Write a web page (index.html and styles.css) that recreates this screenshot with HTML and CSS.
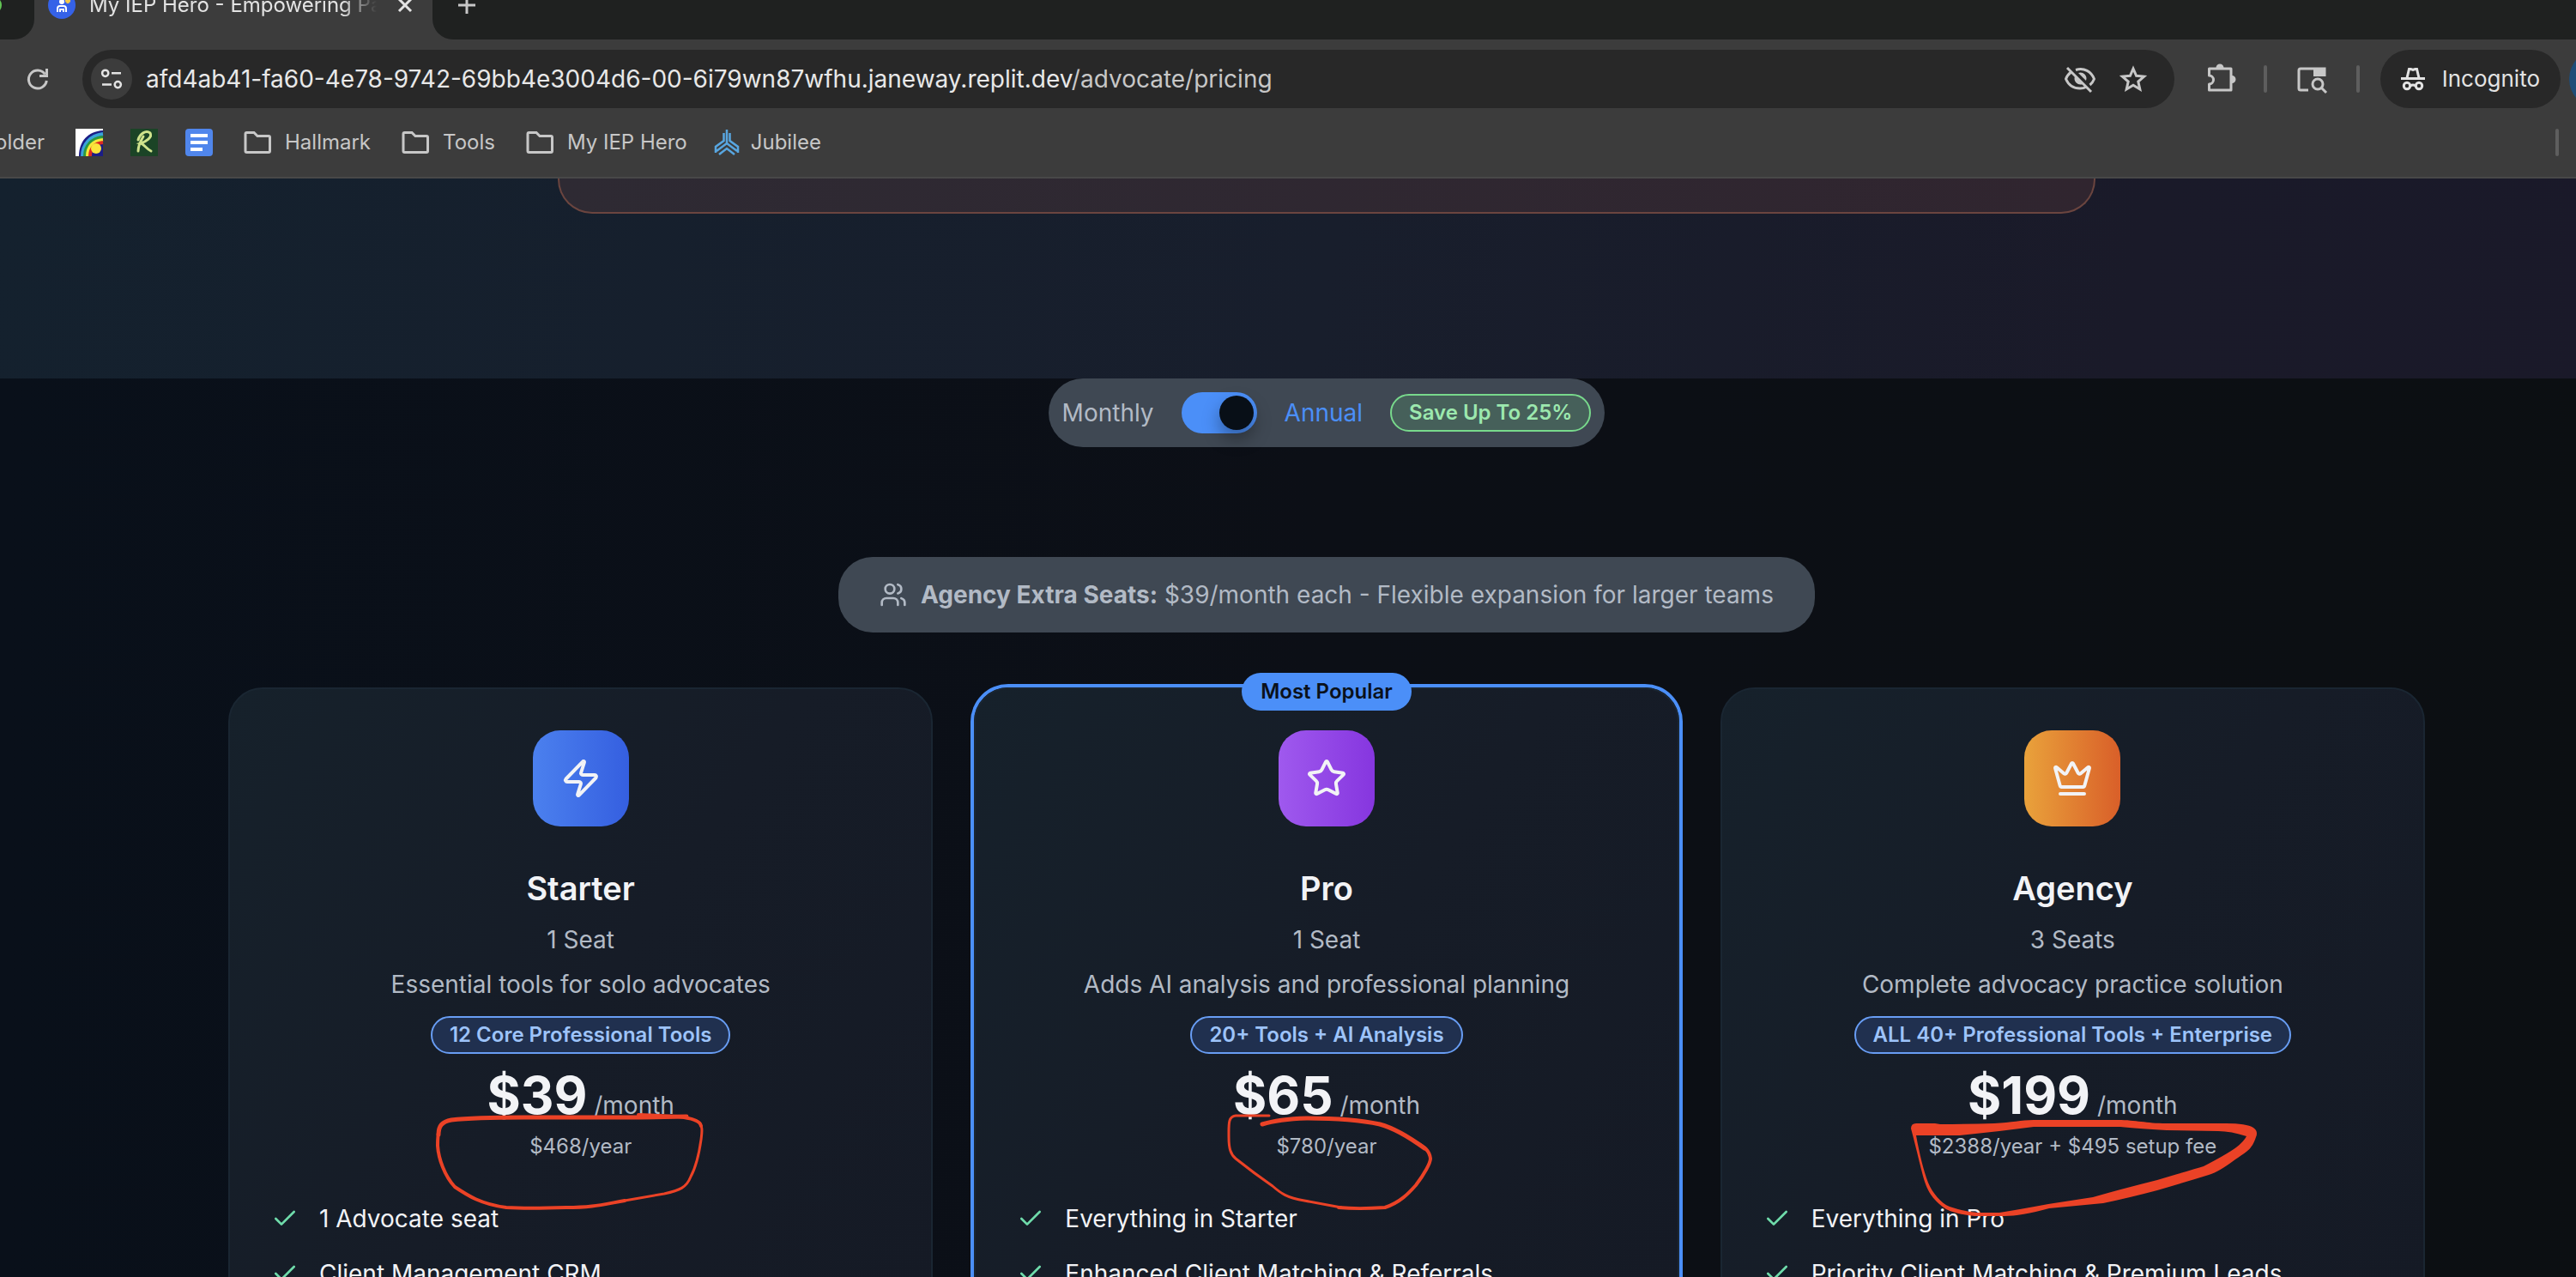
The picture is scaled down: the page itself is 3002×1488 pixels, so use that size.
FILE: index.html
```html
<!DOCTYPE html>
<html lang="en">
<head>
<meta charset="utf-8">
<title>My IEP Hero - Empowering Parents</title>
<link rel="stylesheet" href="styles.css">
</head>
<body>
<header class="browser">
  <div class="tabs">
    <div class="tab-prev"><span class="tab-prev-dot"></span></div>
    <div class="tab">
      <svg class="i32" viewBox="0 0 32 32"><circle cx="16" cy="16" r="16" fill="#3562e8"/><circle cx="16" cy="12" r="3" fill="#fff"/><path d="M11 24v-4a3 3 0 0 1 3-3h4a3 3 0 0 1 3 3v4M14 24v-3h4v3" fill="none" stroke="#fff" stroke-width="2"/><path d="M20 11h6M23 8v6" stroke="#f6c945" stroke-width="3"/></svg>
      <span class="tab-title">My IEP Hero - Empowering Parents</span>
      <button class="icon-btn" aria-label="Close tab"><svg class="i20" viewBox="0 0 20 20" fill="none" stroke="#e3e3e3" stroke-width="3"><path d="M3 3l14 14M17 3L3 17"/></svg></button>
    </div>
    <div class="tab-rest">
      <button class="icon-btn" aria-label="New tab"><svg class="i20" viewBox="0 0 20 20" fill="none" stroke="#c7c7c7" stroke-width="3"><path d="M10 0v20M0 10h20"/></svg></button>
    </div>
  </div>
  <div class="toolbar">
    <button class="icon-btn reload" aria-label="Reload"><svg class="i24" viewBox="0 0 24 24" fill="none" stroke="#c7c7c7" stroke-width="3"><path d="M20.500 6.500A10.500 10.500 0 1 0 22.300 14"/><path d="M22.500 0v8.500H14"/></svg></button>
    <div class="omnibox">
      <button class="site-info" aria-label="View site information"><svg class="i24" viewBox="0 0 24 24" fill="none" stroke="#e3e3e3" stroke-width="2.500"><circle cx="4.700" cy="5.300" r="3.600"/><path d="M12 5.300h11M1 18.600h11"/><circle cx="19.300" cy="18.600" r="3.600"/></svg></button>
      <div class="url" role="textbox" aria-label="Address">afd4ab41-fa60-4e78-9742-69bb4e3004d6-00-6i79wn87wfhu.janeway.replit.dev<span class="path">/advocate/pricing</span></div>
      <button class="icon-btn" aria-label="Third-party cookies blocked"><svg class="i36" viewBox="0 0 36 36" fill="none" stroke="#c7c7c7" stroke-width="3"><path d="M8 9.500C5 12 2.500 15 1.500 18c3 7 9 11 16.500 11 3 0 5-.5 7-1.500M13 7.500c10-3 18 2 21.500 10.500-1 2.500-2.500 5-5 7"/><path d="M16 11a7 7 0 0 1 9 9M12 15a7 7 0 0 0 9 9z" fill="#c7c7c7" stroke="none"/><path d="M3 5l28 28"/></svg></button>
      <button class="icon-btn" aria-label="Bookmark this tab"><svg class="i32" viewBox="0 0 32 32" fill="none" stroke="#c7c7c7" stroke-width="3"><path d="M16 4l3.600 8.300 9 .8-6.800 6 2 8.900-7.800-4.700L8.200 28l2-8.900-6.800-6 9-.8z"/></svg></button>
    </div>
    <button class="icon-btn" aria-label="Extensions"><svg class="i36" viewBox="0 0 36 36" fill="none" stroke="#c7c7c7" stroke-width="3" stroke-linejoin="round"><path d="M6.500 6h25.500v25H6.500v-7a5 5 0 0 0 0-10z"/><path d="M14.500 5a4.500 4.500 0 0 1 9 0zM33 14a4.500 4.500 0 0 1 0 9z" fill="#c7c7c7" stroke="none"/></svg></button>
    <span class="sep"></span>
    <button class="icon-btn" aria-label="Search side panel"><svg class="i36" viewBox="0 0 36 36" fill="none" stroke="#c7c7c7" stroke-width="3"><path d="M14 31H5a2 2 0 0 1-2-2V8a2 2 0 0 1 2-2h28v9"/><path d="M20 5h14v10H20z" fill="#c7c7c7" stroke="none"/><circle cx="25" cy="24" r="6"/><path d="M29 28l6 6"/></svg></button>
    <span class="sep"></span>
    <button class="incognito"><svg class="i28" viewBox="0 0 28 28" fill="none" stroke="#e3e3e3" stroke-width="3"><path d="M0 13.500h28M7 13l2.500-10.500h2l2.500 1 2.500-1h2L21 13"/><circle cx="7" cy="22" r="3.700"/><circle cx="21" cy="22" r="3.700"/><path d="M11 22q3-2 6 0"/></svg>Incognito</button>
    <span class="update"></span>
  </div>
  <nav class="bookmarks">
    <a class="bm cut" href="#">older</a>
    <a class="bm site" href="#" aria-label="Rainbow"><svg class="i32" viewBox="0 0 32 32"><path d="M0 0h32v32H0z" fill="#fff"/><path d="M4 32C4 15 14 3 32 2v30z" fill="#1b1d86"/><g fill="none" stroke-width="4"><path d="M8 32C8 18 17 8 32 6" stroke="#3aa3d8"/><path d="M11 32c0-12 8-21 21-22" stroke="#2c9a3f"/><path d="M14 32c0-11 6-18 18-19" stroke="#f4e83a"/><path d="M17 32c0-9 5-15 15-16" stroke="#dc2a22"/></g><circle cx="24" cy="23" r="6" fill="#fbe63c"/></svg></a>
    <a class="bm site" href="#" aria-label="R"><svg class="i32" viewBox="0 0 32 32"><path d="M0 0h32v32H0z" fill="#1b4426"/><path d="M9 13C11 6 18 1 23 5C26 10 18 15 12 17C16 18 18 23 24 26M15 9C12 14 9 20 9 26" fill="none" stroke="#cfe38c" stroke-width="3" stroke-linecap="round"/></svg></a>
    <a class="bm" href="#" aria-label="Docs"><svg class="i32" viewBox="0 0 32 32"><rect width="32" height="32" rx="4" fill="#5086ec"/><path d="M6 8h20M6 16h20M6 24h14" stroke="#fff" stroke-width="4"/></svg></a>
    <a class="bm" href="#"><svg class="i32 folder" viewBox="0 0 32 32"><path d="M2 26V6q0-1.500 1.500-1.500H12l4 4h13q1.500 0 1.500 1.500v16q0 1.500-1.500 1.500H3.500Q2 27.500 2 26z"/></svg>Hallmark</a>
    <a class="bm" href="#"><svg class="i32 folder" viewBox="0 0 32 32"><path d="M2 26V6q0-1.500 1.500-1.500H12l4 4h13q1.500 0 1.500 1.500v16q0 1.500-1.500 1.500H3.500Q2 27.500 2 26z"/></svg>Tools</a>
    <a class="bm" href="#"><svg class="i32 folder" viewBox="0 0 32 32"><path d="M2 26V6q0-1.500 1.500-1.500H12l4 4h13q1.500 0 1.500 1.500v16q0 1.500-1.500 1.500H3.500Q2 27.500 2 26z"/></svg>My IEP Hero</a>
    <a class="bm jub" href="#"><svg class="i32" viewBox="0 0 32 32" fill="none" stroke="#58a6e0" stroke-width="2.500"><path d="M12.500 5v9L3 21v7M19.500 5v9l9.500 7v7M16 1v16M16 17L4 26M16 17l12 9M7 30l9-7 9 7"/></svg>Jubilee</a>
    <span class="sep last"></span>
  </nav>
</header>
<main class="page">
  <section class="hero"><div class="notice"></div></section>
  <section class="pricing">
    <div class="billing">
      <label for="annual">Monthly</label>
      <input type="checkbox" role="switch" id="annual" class="switch" checked>
      <label for="annual" class="on">Annual</label>
      <span class="badge save">Save Up To 25%</span>
    </div>
    <p class="seats"><svg class="i32" viewBox="0 0 24 24" fill="none" stroke="currentColor" stroke-width="2" stroke-linecap="round" stroke-linejoin="round"><path d="M16 21v-2a4 4 0 0 0-4-4H6a4 4 0 0 0-4 4v2"/><circle cx="9" cy="7" r="4"/><path d="M22 21v-2a4 4 0 0 0-3-3.870M16 3.130a4 4 0 0 1 0 7.750"/></svg><span><strong>Agency Extra Seats:</strong> $39/month each - Flexible expansion for larger teams</span></p>
    <div class="plans">
      <article class="card">
        <div class="tile blue"><svg class="i48" viewBox="0 0 24 24"><path d="M4 14a1 1 0 0 1-.78-1.630l9.900-10.200a.5.5 0 0 1 .86.460l-1.920 6.020A1 1 0 0 0 13 10h7a1 1 0 0 1 .78 1.630l-9.900 10.200a.5.5 0 0 1-.86-.460l1.920-6.020A1 1 0 0 0 11 14z"/></svg></div>
        <h2>Starter</h2>
        <p class="line">1 Seat</p>
        <p class="line">Essential tools for solo advocates</p>
        <span class="badge tools">12 Core Professional Tools</span>
        <p class="price"><strong>$39</strong> /month</p>
        <p class="year">$468/year</p>
        <ul>
          <li><svg class="i32 check" viewBox="0 0 24 24"><path d="M20 6 9 17l-5-5"/></svg>1 Advocate seat</li>
          <li><svg class="i32 check" viewBox="0 0 24 24"><path d="M20 6 9 17l-5-5"/></svg>Client Management CRM</li>
        </ul>
        <svg class="mark" viewBox="268 803 817 685" width="817" height="685"><g>
          <path stroke-width="5" d="M511 1322C511 1312 515 1307 526 1305C560 1301 600 1302 642 1302H745L800 1301"/>
          <path stroke-width="4" d="M744 1299L790 1301Q816 1304 817 1312"/>
          <path stroke-width="3" d="M812 1306C820 1310 818 1320 817 1328C815 1342 811 1360 805 1371C800 1384 792 1387 774 1391L728 1399"/>
          <path stroke-width="4" d="M728 1399C700 1404 690 1407 660 1407C630 1408 605 1408 590 1407C560 1403 545 1393 530 1383C518 1370 511 1350 510 1335C510 1326 510 1322 512 1315"/>
        </g></svg>
      </article>
      <article class="card popular">
        <span class="badge flag">Most Popular</span>
        <div class="tile purple"><svg class="i48" viewBox="0 0 24 24"><path d="M11.525 2.295a.53.53 0 0 1 .95 0l2.310 4.679a2.123 2.123 0 0 0 1.595 1.160l5.166.756a.53.53 0 0 1 .294.904l-3.736 3.638a2.123 2.123 0 0 0-.611 1.878l.882 5.140a.53.53 0 0 1-.771.560l-4.618-2.428a2.122 2.122 0 0 0-1.973 0L6.396 21.010a.53.53 0 0 1-.770-.560l.881-5.139a2.122 2.122 0 0 0-.611-1.879L2.160 9.795a.53.53 0 0 1 .294-.906l5.165-.755a2.122 2.122 0 0 0 1.597-1.160z"/></svg></div>
        <h2>Pro</h2>
        <p class="line">1 Seat</p>
        <p class="line">Adds AI analysis and professional planning</p>
        <span class="badge tools">20+ Tools + AI Analysis</span>
        <p class="price"><strong>$65</strong> /month</p>
        <p class="year">$780/year</p>
        <ul>
          <li><svg class="i32 check" viewBox="0 0 24 24"><path d="M20 6 9 17l-5-5"/></svg>Everything in Starter</li>
          <li><svg class="i32 check" viewBox="0 0 24 24"><path d="M20 6 9 17l-5-5"/></svg>Enhanced Client Matching &amp; Referrals</li>
        </ul>
        <svg class="mark" viewBox="1137 803 817 685" width="817" height="685"><g>
          <path stroke-width="3" d="M1479 1300L1440 1300C1431 1301 1432 1310 1432 1325C1432 1338 1434 1345 1440 1350C1455 1362 1470 1373 1483 1382C1492 1390 1500 1396 1520 1399L1563 1407"/>
          <path stroke-width="4" d="M1560 1407C1580 1409 1600 1408 1614 1407C1632 1401 1642 1390 1650 1381C1660 1368 1667 1355 1667 1350C1666 1341 1660 1336 1650 1331"/>
          <path stroke-width="5" d="M1660 1338Q1630 1316 1608 1310C1580 1304 1550 1303 1523 1303Q1490 1304 1471 1310"/>
        </g></svg>
      </article>
      <article class="card">
        <div class="tile orange"><svg class="i48" viewBox="0 0 24 24"><path d="M11.562 3.266a.5.5 0 0 1 .876 0L15.390 8.870a1 1 0 0 0 1.516.294L21.183 5.500a.5.5 0 0 1 .798.519l-2.834 10.246a1 1 0 0 1-.956.734H5.810a1 1 0 0 1-.957-.734L2.020 6.020a.5.5 0 0 1 .798-.519l4.276 3.664a1 1 0 0 0 1.516-.294zM5 21h14"/></svg></div>
        <h2>Agency</h2>
        <p class="line">3 Seats</p>
        <p class="line">Complete advocacy practice solution</p>
        <span class="badge tools">ALL 40+ Professional Tools + Enterprise</span>
        <p class="price"><strong>$199</strong> /month</p>
        <p class="year">$2388/year + $495 setup fee</p>
        <ul>
          <li><svg class="i32 check" viewBox="0 0 24 24"><path d="M20 6 9 17l-5-5"/></svg>Everything in Pro</li>
          <li><svg class="i32 check" viewBox="0 0 24 24"><path d="M20 6 9 17l-5-5"/></svg>Priority Client Matching &amp; Premium Leads</li>
        </ul>
        <svg class="mark" viewBox="2007 803 817 685" width="817" height="685"><path class="band" d="M2227 1315Q2227 1309 2233 1309H2255L2261 1310Q2295 1310 2324 1309C2345 1308 2355 1305 2370 1305H2468C2490 1305 2500 1309 2525 1309H2594Q2618 1309 2626 1314Q2632 1318 2629 1325C2624 1340 2618 1342 2605 1351Q2585 1366 2574 1369Q2545 1378 2514 1387Q2480 1396 2451 1402L2388 1408Q2355 1417 2336 1417H2301Q2280 1415 2268 1409C2250 1397 2246 1385 2243 1377C2238 1360 2235 1345 2227 1315ZM2233 1323C2237 1345 2242 1365 2247 1378C2252 1390 2262 1402 2272 1406Q2290 1412 2305 1413H2330Q2355 1409 2387 1403L2439 1395Q2470 1386 2514 1375Q2555 1363 2568 1359Q2595 1345 2606 1337Q2615 1330 2618 1324Q2600 1318 2585 1318L2525 1317Q2490 1315 2471 1313H2370L2330 1318L2284 1323Z"/></svg>
      </article>
    </div>
  </section>
</main>
</body>
</html>
```
FILE: styles.css
```css
* { box-sizing: border-box; }
html { background: #0a0f16; }
body {
  margin: 0;
  height: 100vh;
  overflow: hidden;
  font-family: Inter, "Liberation Sans", sans-serif;
  font-size: 28px;
  line-height: 40px;
  color: #b2bac5;
  display: flex;
  flex-direction: column;
}
p, h2, ul { margin: 0; padding: 0; }
button { font: inherit; color: inherit; border: 0; padding: 0; background: none; }
a { color: inherit; text-decoration: none; }
svg { flex: none; display: block; overflow: visible; }
.i20 { width: 20px; height: 20px; }
.i24 { width: 24px; height: 24px; }
.i28 { width: 28px; height: 28px; }
.i32 { width: 32px; height: 32px; }
.i36 { width: 36px; height: 36px; }
.i48 { width: 48px; height: 48px; }

/* Browser chrome */
.browser { flex: none; background: #3c3c3c; border-bottom: 2px solid #484848; font-size: 24px; color: #c7c7c7; }
.tabs { height: 46px; display: flex; align-items: flex-end; overflow: hidden; }
.tab-prev, .tab, .tab-rest { height: 80px; flex: none; display: flex; align-items: center; }
.tab-prev { width: 40px; background: #1f2120; border-radius: 0 0 24px 0; }
.tab-prev-dot { width: 20px; height: 20px; margin-left: -18px; border-radius: 50%; background: #62c554; }
.tab { width: 464px; padding: 0 22px 0 16px; gap: 16px; color: #e3e3e3; }
.tab-title { flex: 1; overflow: hidden; white-space: nowrap; mask-image: linear-gradient(90deg, #000 86%, transparent 98%); }
.tab-rest { flex: 1; padding-left: 30px; background: #1f2120; border-radius: 0 0 0 24px; }
.toolbar { display: flex; align-items: center; gap: 34px; padding-top: 12px; padding-left: 32px; overflow: hidden; }
.reload { margin-right: 6px; }
.omnibox { flex: 1; height: 68px; display: flex; align-items: center; gap: 28px; padding: 0 32px 0 10px; border-radius: 34px; background: #282828; }
.site-info { width: 48px; height: 48px; border-radius: 50%; background: #3c3c3c; display: grid; place-items: center; }
.url { flex: 1; margin-left: -12px; font-size: 28px; color: #e8e8e8; white-space: nowrap; }
.path { color: #c7c7c7; }
.sep { flex: none; width: 4px; height: 32px; border-radius: 2px; background: #5e5e5e; }
.incognito { height: 68px; margin-left: -10px; padding: 0 24px; display: flex; align-items: center; gap: 20px; border-radius: 34px; background: #282828; color: #e3e3e3; font-size: 26px; }
.update { flex: none; width: 68px; height: 68px; margin: 0 -60px 0 -24px; border-radius: 50%; background: #1f4d78; }
.bookmarks { height: 80px; display: flex; align-items: center; gap: 36px; padding-right: 20px; }
.bm { display: flex; align-items: center; gap: 16px; }
.site { margin-right: -4px; }
.cut { width: 52px; justify-content: flex-end; }
.jub { gap: 12px; margin-left: -6px; }
.folder { fill: none; stroke: #c7c7c7; stroke-width: 3px; }
.last { margin-left: auto; }

/* The page runs on past the right edge of the window */
.page { flex: 1; min-height: 0; overflow: hidden; margin-right: -90px; background: linear-gradient(90deg, #09101a, #0c0f16 50%, #0c0f12); }
.hero { height: 233px; background: linear-gradient(100deg, #14212e, #181e2c 50%, #1a1a29 80%, #1a1929); }
.notice { width: 1792px; height: 41px; margin: 0 auto; border: 2px solid #6b453f; border-top: 0; border-radius: 0 0 40px 40px; background: linear-gradient(90deg, #2e2a33, #30252f); }
.pricing { display: flex; flex-direction: column; align-items: center; }
.billing { height: 80px; padding: 0 16px; display: flex; align-items: center; gap: 32px; border-radius: 40px; background: #3f4853; }
.on { color: #4b8ff8; }
.switch { appearance: none; margin: 0; width: 88px; height: 48px; padding: 4px; border-radius: 24px; background: #4b8ff8; display: flex; justify-content: flex-end; }
.switch::before { content: ""; width: 40px; height: 40px; border-radius: 50%; background: #080f17; box-shadow: 0 10px 20px rgba(0, 0, 0, .35); }
.badge { height: 44px; padding: 0 20px; border: 2px solid; border-radius: 22px; font-size: 24px; font-weight: 600; display: flex; align-items: center; white-space: nowrap; }
.save { color: #9ce8ae; border-color: #78d98c; background: #46605a; }
.seats { height: 88px; margin-top: 128px; padding: 0 48px; display: flex; align-items: center; gap: 16px; border-radius: 40px; background: #3f4853; }
.seats strong { font-weight: 700; }
.plans { width: 2560px; margin-top: 64px; display: grid; grid-template-columns: repeat(3, 1fr); gap: 48px; }
.card { position: relative; padding: 48px; border: 2px solid #1a2632; border-radius: 40px; background: linear-gradient(125deg, #16212b, #161c27 50%, #151a25); display: flex; flex-direction: column; align-items: center; }
.popular { box-shadow: 0 0 0 4px #4b8ff8; }
.flag { position: absolute; top: -19px; border: 0; padding: 0 22px; background: #4b8ff8; color: #0a111b; }
.tile { width: 112px; height: 112px; border-radius: 32px; display: grid; place-items: center; }
.tile svg { fill: none; stroke: #f2f3f6; stroke-width: 2; stroke-linecap: round; stroke-linejoin: round; }
.blue { background: linear-gradient(90deg, #4b80ee, #355fe0); }
.purple { background: linear-gradient(90deg, #9f59ee, #8636df); }
.orange { background: linear-gradient(90deg, #e9a23b, #d95f29); }
h2 { margin-top: 46px; font-size: 38px; font-weight: 600; line-height: 52px; color: #f2f3f6; }
.line { margin-top: 12px; }
h2 + .line { margin-top: 14px; }
.tools { margin-top: 17px; color: #9dc3f9; border-color: #689df4; background: #20304f; }
.price { margin-top: 16px; line-height: 64px; }
.price strong { font-size: 60px; font-weight: 700; color: #f2f3f6; }
.year { font-size: 24px; line-height: 32px; }
ul { align-self: stretch; margin-top: 48px; display: grid; gap: 24px; list-style: none; color: #f2f3f6; }
li { display: flex; align-items: center; gap: 24px; white-space: nowrap; }
.check { fill: none; stroke: #6fdcab; stroke-width: 2; stroke-linecap: round; stroke-linejoin: round; }
.mark { position: absolute; top: 0; left: 0; pointer-events: none; }
.mark g { fill: none; stroke: #eb4226; stroke-linecap: round; stroke-linejoin: round; }
.band { fill: #eb4226; fill-rule: evenodd; }
```
